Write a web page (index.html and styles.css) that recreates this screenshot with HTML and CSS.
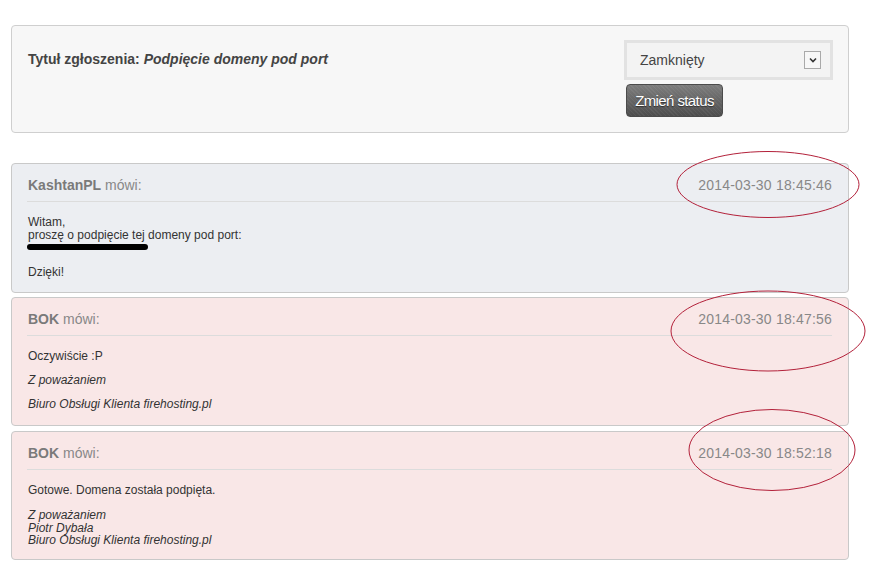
FILE: index.html
```html
<!DOCTYPE html>
<html>
	<head>
		<title>Podpięcie domeny pod port</title>
		<link rel="stylesheet" href="styles.css">
	</head>
	<body>
		<div class="ticket">
			<div class="ticketHead">
				<div class="ticketTitle">Tytuł zgłoszenia: <i>Podpięcie domeny pod port</i></div>
				<form class="statusForm">
					<div class="fakeSelect">
						<span>Zamknięty</span>
						<span class="selectArrow">
							<svg width="8" height="6" viewBox="0 0 8 6"><path d="M1 1.5 L4 4.5 L7 1.5" fill="none" stroke="#333" stroke-width="1.6"/></svg>
						</span>
					</div>
					<button type="button" class="statusBtn">Zmień status</button>
				</form>
			</div>

			<div class="reply client">
				<div class="replyHead">
					<span><b>KashtanPL</b> mówi:</span>
					<span class="replyDate">2014-03-30 18:45:46</span>
				</div>
				<div class="replyBody">
					<p>Witam,<br>proszę o podpięcie tej domeny pod port:<br><span class="redacted"></span></p>
					<p>Dzięki!</p>
				</div>
			</div>

			<div class="reply staff">
				<div class="replyHead">
					<span><b>BOK</b> mówi:</span>
					<span class="replyDate">2014-03-30 18:47:56</span>
				</div>
				<div class="replyBody">
					<p>Oczywiście :P</p>
					<p><i>Z poważaniem</i></p>
					<p><i>Biuro Obsługi Klienta firehosting.pl</i></p>
				</div>
			</div>

			<div class="reply staff">
				<div class="replyHead">
					<span><b>BOK</b> mówi:</span>
					<span class="replyDate">2014-03-30 18:52:18</span>
				</div>
				<div class="replyBody">
					<p>Gotowe. Domena została podpięta.</p>
					<p class="sign"><i>Z poważaniem<br>Piotr Dybała<br>Biuro Obsługi Klienta firehosting.pl</i></p>
				</div>
			</div>
		</div>

		<!-- hand drawn circles round the dates -->
		<svg class="marks" width="890" height="576" viewBox="0 0 890 576">
			<g fill="none" stroke="#b3213a" stroke-width="1">
				<ellipse cx="768" cy="184.5" rx="91" ry="33"/>
				<ellipse cx="768" cy="331" rx="97" ry="40"/>
				<ellipse cx="772" cy="450" rx="83" ry="40.5"/>
			</g>
		</svg>
	</body>
</html>
```

FILE: styles.css
```css
* {box-sizing: border-box;}
body {
	margin: 0;
	background: #fff;
	font-family: "Liberation Sans", Arial, sans-serif;
	color: #333;
}
.ticket {
	width: 838px;
	margin: 25px 0 0 11px;
}
.ticketHead {
	display: flex;
	justify-content: space-between;
	height: 108px;
	padding: 14px 15px 0 16px;
	background: #f7f7f7;
	border: 1px solid #cfcfcf;
	border-radius: 4px;
	margin-bottom: 30px;
}
.ticketTitle {
	margin-top: 11px;
	font-size: 14px;
	font-weight: bold;
	line-height: 16px;
	color: #444;
}
.statusForm {margin: 0;}
.fakeSelect {
	display: flex;
	align-items: center;
	justify-content: space-between;
	width: 209px;
	height: 40px;
	padding: 0 9px 0 13px;
	background: #f3f3f3;
	border: 3px solid #e2e2e2;
	font-size: 14px;
	color: #444;
}
.selectArrow {
	display: flex;
	align-items: center;
	justify-content: center;
	width: 17px;
	height: 18px;
	background: #f7f7f7;
	border: 1px solid #a9a9a9;
}
.statusBtn {
	display: block;
	margin: 4px 0 0 2px;
	width: 97px;
	height: 33px;
	padding: 0;
	border: 1px solid #4b4b4b;
	border-radius: 4px;
	background:
		repeating-linear-gradient(45deg, rgba(255,255,255,.05) 0 1px, transparent 1px 3px),
		linear-gradient(#7d7d7d, #4d4d4d);
	font-family: "Liberation Sans", Arial, sans-serif;
	font-size: 15px;
	letter-spacing: -.6px;
	color: #fff;
	text-shadow: 0 1px 1px rgba(0,0,0,.5);
}
.reply {
	border: 1px solid #c9c9c9;
	border-radius: 4px;
	padding: 12px 16px 15px 15px;
	height: 130px;
	margin-bottom: 4px;
}
.reply.client {background: #eceef2;}
.reply.staff {background: #f9e7e7; height: 129px; margin-bottom: 5px;}
.replyHead {
	display: flex;
	justify-content: space-between;
	font-size: 14px;
	line-height: 18px;
	color: #888;
	padding: 0 0 7px 1px;
	border-bottom: 1px solid #dcdcdc;
}
.replyHead b {color: #7a7a7a;}
.replyDate {letter-spacing: .2px;}
.replyBody {
	padding: 14px 0 0 1px;
	font-size: 12px;
	line-height: 13px;
	color: #333;
}
.replyBody p {margin: 0 0 11px;}
.replyBody p:last-child {margin-bottom: 0;}
.replyBody p.sign {margin-top: 12px; line-height: 12.5px;}
.redacted {
	display: inline-block;
	width: 121px;
	height: 6px;
	border-radius: 3px;
	background: #000;
	vertical-align: 2px;
	margin-left: -1px;
}
.marks {
	position: absolute;
	top: 0;
	left: 0;
	pointer-events: none;
}
```
